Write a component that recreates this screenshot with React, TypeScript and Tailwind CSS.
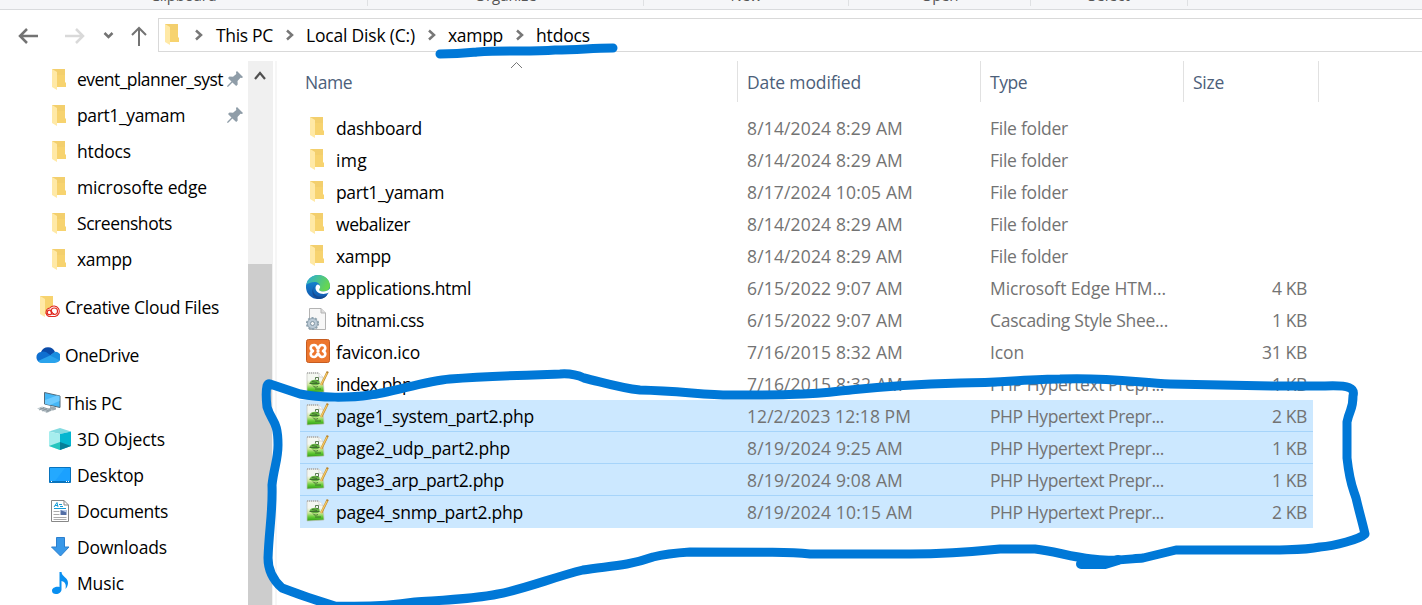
import React from "react";

type IconName = "folder" | "edge" | "css" | "xampp" | "php" | "cloudFolder" | "onedrive" | "pc" | "cube" | "desktop" | "doc" | "down" | "music";

function Icon({ name }: { name: IconName }) {
  switch (name) {
    case "folder":
      return (
        <svg width="14" height="21" viewBox="0 0 14 21">
          <path d="M0 0H13V13L14 14V18H5L0 18Z" fill="#f7d36f" />
          <path d="M0 0H13V6H0Z" fill="#efcb6c" opacity=".5" />
          <path d="M0 0L5 3V21L0 18Z" fill="#ffe9a6" />
        </svg>
      );
    case "cloudFolder":
      return (
        <svg width="20" height="22" viewBox="0 0 20 22">
          <path d="M0 0H13V18H5L0 18Z" fill="#f7d36f" />
          <path d="M0 0L5 3V21L0 18Z" fill="#ffe9a6" />
          <path d="M9 20.500H15A5.300 5.300 0 1 0 9.800 12A4.400 4.400 0 0 0 9 20.500Z" fill="#fff" stroke="#e12a20" strokeWidth="1.100" />
          <circle cx="14.300" cy="15.200" r="3.200" fill="none" stroke="#e12a20" strokeWidth="1.200" />
          <circle cx="9.500" cy="16.400" r="2.300" fill="none" stroke="#e12a20" strokeWidth="1.200" />
          <path d="m10 14.500 4 3.500" stroke="#e12a20" strokeWidth="1" />
        </svg>
      );
    case "onedrive":
      return (
        <svg width="24" height="16" viewBox="0 0 24 16">
          <path d="M5 5A7.500 7.500 0 0 1 19 5L14 9Z" fill="#0a4ba8" />
          <path d="M5 5a6 6 0 0 1 5 0l7 5-12 5.500A5.300 5.300 0 0 1 5 5Z" fill="#0f6fd0" />
          <path d="M18.500 5a5.300 5.300 0 0 1 2.500 10.300L12 10Z" fill="#1a8ee0" />
          <path d="M2 14 14 8.500 23.200 13c-1 2-2.700 3-4.700 3H5.500C4 16 2.900 15.200 2 14Z" fill="#2aa3ec" />
        </svg>
      );
    case "pc":
      return (
        <svg width="24" height="22" viewBox="0 0 24 22">
          <path d="M7.500 0.500 23 4V15.500L7.500 12Z" fill="#45b7f7" stroke="#546b7a" />
          <path d="M8 8 20 3.500 22.500 4V9L13 13 8 12Z" fill="#6ecbff" />
          <path d="M13 14v2l-3 1 6 1.500 3-1v-2" fill="#9da9b0" />
          <path d="M0 16.500 5 14.500 16 18 10 21Z" fill="#c1cbd0" />
          <path d="m3 16 9 3M6 15.500l8 2.500M2 18l5-2M5 19l5-2M9 20l5-2" stroke="#7c8a92" strokeWidth=".7" />
        </svg>
      );
    case "cube":
      return (
        <svg width="22" height="22" viewBox="0 0 22 22">
          <path d="M11 0 22 3.500 11 6 0 3.500Z" fill="#83dbe0" />
          <path d="M0 3.500 11 6V22L0 18Z" fill="#a6eeee" />
          <path d="M11 6 22 3.500V18L11 22Z" fill="#05b6d0" />
          <path d="M11 14 0 18 11 22Z" fill="#26c5be" />
          <path d="M11 14 22 18 11 22Z" fill="#067f98" />
        </svg>
      );
    case "desktop":
      return (
        <svg width="22" height="16" viewBox="0 0 22 16">
          <path d="M.5.5h21v15H.5Z" fill="#1ba1ff" stroke="#0873bd" />
          <path d="M1 14V1h15L6 14Z" fill="#24a9ff" />
          <path d="M1 14.500h20" stroke="#0873bd" />
          <path d="M2 14.500h1M17 14.500h1M19 14.500h1" stroke="#fff" />
        </svg>
      );
    case "doc":
      return (
        <svg width="18" height="22" viewBox="0 0 18 22">
          <path d="M.5.500H13L17.500 5V21.500H.5Z" fill="#fff" stroke="#888" />
          <path d="M13 .5V5h4.500" fill="none" stroke="#888" />
          <path d="M3 7 6 2.500 7 7M4 5.500h3M8 4.500h3M9 6.500h3M3 8.500h12" fill="none" stroke="#159bd7" />
          <path d="M2.500 11.500h6M2.500 14.500h6M2.500 17.500h13M2.500 19.500h13" stroke="#aaa" />
          <path d="M9.500 10h6v5h-6Z" fill="#536fa6" /><path d="M9.500 10h6v2.500Z" fill="#b9cbea" />
        </svg>
      );
    case "down":
      return (
        <svg width="19" height="20" viewBox="0 0 19 20">
          <path d="M5.500.5h8V10H18L9.500 19 .5 10h5Z" fill="#3998e8" stroke="#2b7fce" />
        </svg>
      );
    case "music":
      return (
        <svg width="17" height="22" viewBox="0 0 17 22">
          <path d="M7.500 0h2c.3 5 6.500 5 6.500 11 0 2-1 4.500-2.500 6 .8-4 .2-7-4-8v8.500C9.500 20 7 22 4 22c-2.300 0-4-1-4-3.200 0-2.700 3.500-4.500 7.500-3.800Z" fill="#098ff0" />
        </svg>
      );
    case "edge":
      return (
        <svg width="24" height="24" viewBox="0 0 24 24">
          <defs>
            <linearGradient id="eg" x1="0" y1="0" x2="1" y2=".4"><stop stopColor="#28acd8" /><stop offset="1" stopColor="#67d651" /></linearGradient>
            <linearGradient id="eb" x1="0" y1="0" x2="0" y2="1"><stop stopColor="#1592d8" /><stop offset="1" stopColor="#1356ae" /></linearGradient>
          </defs>
          <circle cx="12" cy="12" r="12" fill="url(#eb)" />
          <path d="M9 11c-4 4-1 10 5 10.500 3 .2 5.500-.6 7.500-2-2.500 4-6 4.800-10 4.500C5.500 22 5 14 9 11Z" fill="#154b92" />
          <path d="M.3 9.500C2 3.500 6.500 0 12 0c6.600 0 12 4.700 12 10.500 0 4-3.200 6.200-7 6.200-2.600 0-4.400-1-4.400-2.200 0-1 1.400-1.300 1.400-3.200 0-2.300-2.400-4.300-5.300-4.300C5 7 2 8.500.3 9.500Z" fill="url(#eg)" />
          <path d="M12 9.500c-3 .5-3.300 5-.8 7.300 3 2.700 8 2.700 11.300 1L24 17.500V13.500c-2 2.700-6 3.500-9 2.800-1.900-.5-2.300-1.500-1.500-2.500 1.300-1.600.7-3.500-1.500-4.300Z" fill="#fff" />
        </svg>
      );
    case "css":
      return (
        <svg width="21" height="23" viewBox="0 0 21 23">
          <path d="M3.500.5H15L19.500 5V21.500H3.500Z" fill="#f7f7f7" stroke="#b3b3b3" />
          <path d="M15 .5V5h4.500" fill="#ddd" stroke="#b3b3b3" />
          <circle cx="6.500" cy="15.500" r="5.700" fill="#9eafbc" stroke="#8fa2ae" strokeWidth="1.800" strokeDasharray="2 1.600" />
          <circle cx="6.500" cy="15.500" r="4.500" fill="#bccbd7" /><circle cx="6.500" cy="15.500" r="2" fill="#f7f7f7" stroke="#8094a2" />
        </svg>
      );
    case "xampp":
      return (
        <svg width="24" height="24" viewBox="0 0 24 24">
          <rect x=".5" y=".5" width="23" height="23" rx="2" fill="#ed762d" stroke="#c65c20" />
          <path d="M12 9.800C11 9.800 11.300 6 8.200 6C4.200 6 3.500 10.300 7 12C3.500 13.700 4.200 18 8.200 18C11.300 18 11 14.200 12 14.200C13 14.200 12.700 18 15.800 18C19.800 18 20.500 13.700 17 12C20.500 10.300 19.800 6 15.800 6C12.700 6 13 9.800 12 9.800Z" fill="none" stroke="#fff" strokeWidth="2.600" strokeLinejoin="round" />
          <path d="M10.500 12h3" stroke="#fff" strokeWidth="2.400" />
        </svg>
      );
    case "php":
      return (
        <svg width="23" height="23" viewBox="0 0 23 23">
          <defs><linearGradient id="pg" x1="0" y1="0" x2="0" y2="1"><stop offset=".35" stopColor="#f4f7f1" /><stop offset=".6" stopColor="#cbe895" /><stop offset=".8" stopColor="#62c934" /><stop offset="1" stopColor="#2f9d12" /></linearGradient></defs>
          <path d="M1 2H13L17 6L18 21L1 22Z" fill="url(#pg)" stroke="#c1c3bd" strokeWidth=".7" />
          <path d="M13 2V6H17" fill="#fff" stroke="#c6c6c6" strokeWidth=".7" />
          <path d="M1 2h12" stroke="#aaa" strokeWidth="1.500" strokeDasharray="1 1" />
          <path d="M3.500 12c1-3.500 7-4.500 10-1.500v2.500c-3 2-8 1.500-10-1Z" fill="#64b340" />
          <path d="M3.500 12.500h10M6 10.500l5 1M7 14.500c1 2 3 2 5 1M9 18h6M9.500 8.500V6.500h3v3h-2" fill="none" stroke="#365e2b" strokeWidth=".8" />
          <path d="M21.800.5 15.200 14" stroke="#b8842f" strokeWidth="2.200" /><path d="M21 2 14.900 14" stroke="#f5c965" strokeWidth="1.300" />
        </svg>
      );
  }
}

function Label({ text, width, className = "" }: { text: string; width: number; className?: string }) {
  const ref = React.useRef<HTMLSpanElement>(null);
  React.useLayoutEffect(() => {
    const el = ref.current;
    if (!el) return;
    el.style.letterSpacing = "0px";
    const natural = el.getBoundingClientRect().width;
    el.style.letterSpacing = `${(width - natural) / text.length}px`;
  }, [text, width]);
  return <span ref={ref} className={`inline-block shrink-0 whitespace-pre ${className}`}>{text}</span>;
}

const favorites = [
  { text: "event_planner_syst", width: 146, pinned: true },
  { text: "part1_yamam", width: 108, pinned: true },
  { text: "htdocs", width: 54 },
  { text: "microsofte edge", width: 130 },
  { text: "Screenshots", width: 95 },
  { text: "xampp", width: 55 },
];
const places: { text: string; width: number; icon: IconName }[] = [
  { text: "3D Objects", width: 88, icon: "cube" },
  { text: "Desktop", width: 67, icon: "desktop" },
  { text: "Documents", width: 91, icon: "doc" },
  { text: "Downloads", width: 90, icon: "down" },
  { text: "Music", width: 47, icon: "music" },
];
type Row = [IconName, string, number, string, number, string, number, string];
const folderRows: Row[] = [
  ["folder", "dashboard", 86, "8/14/2024 8:29 AM", 156, "File folder", 78, ""],
  ["folder", "img", 31, "8/14/2024 8:29 AM", 156, "File folder", 78, ""],
  ["folder", "part1_yamam", 108, "8/17/2024 10:05 AM", 166, "File folder", 78, ""],
  ["folder", "webalizer", 74, "8/14/2024 8:29 AM", 156, "File folder", 78, ""],
  ["folder", "xampp", 55, "8/14/2024 8:29 AM", 156, "File folder", 78, ""],
];
const fileRows: Row[] = [
  ["edge", "applications.html", 135, "6/15/2022 9:07 AM", 156, "Microsoft Edge HTM...", 176, "4 KB"],
  ["css", "bitnami.css", 88, "6/15/2022 9:07 AM", 156, "Cascading Style Shee...", 178, "1 KB"],
  ["xampp", "favicon.ico", 84, "7/16/2015 8:32 AM", 156, "Icon", 34, "31 KB"],
  ["php", "index.php", 76, "7/16/2015 8:32 AM", 156, "PHP Hypertext Prepr...", 174, "1 KB"],
  ["php", "page1_system_part2.php", 198, "12/2/2023 12:18 PM", 164, "PHP Hypertext Prepr...", 174, "2 KB"],
  ["php", "page2_udp_part2.php", 174, "8/19/2024 9:25 AM", 156, "PHP Hypertext Prepr...", 174, "1 KB"],
  ["php", "page3_arp_part2.php", 168, "8/19/2024 9:08 AM", 156, "PHP Hypertext Prepr...", 174, "1 KB"],
  ["php", "page4_snmp_part2.php", 187, "8/19/2024 10:15 AM", 166, "PHP Hypertext Prepr...", 174, "2 KB"],
];

function FileRow({ row, index }: { row: Row; index: number }) {
  const [icon, name, nw, date, dw, type, tw, size] = row;
  const selected = index >= 9;
  return (
    <div className={`flex h-8 w-[1013px] items-center text-[#737373] ${selected ? "bg-[#cce8ff]" : ""} ${selected && index < 12 ? "border-b border-[#a6d4fa]" : ""}`}>
      <div className={`flex w-[30px] shrink-0 justify-start ${icon === "folder" ? "pl-[10px] pb-px" : icon === "css" ? "pl-1.5 pb-px" : icon === "php" ? "pl-1.5 pb-[3px]" : "pl-1.5 pb-0.5"}`}><Icon name={icon} /></div>
      <div className="w-[417px] shrink-0 pl-1.5 text-black"><Label text={name} width={nw} /></div>
      <div className="w-[243px] shrink-0"><Label text={date} width={dw} /></div>
      <div className="w-[203px] shrink-0"><Label text={type} width={tw} /></div>
      <div className="w-[114px] shrink-0 text-right">{size && <Label text={size} width={size === "31 KB" ? 45 : 35} />}</div>
    </div>
  );
}

function Separator({ className }: { className: string }) {
  return <div className={className}><svg width="8" height="12" viewBox="0 0 8 12"><path d="m1 1.500 5 4.500-5 4.500" fill="none" stroke="#777" strokeWidth="2.500" /></svg></div>;
}

function Pin() {
  return <svg width="16" height="17" viewBox="0 0 16 17"><path d="M10 0 16 6l-1 1-1.500-.3-3 3.300.2 3.500-1.500 1.500-3.800-3.600L1.500 15.500 0 16l.5-1.500 4-4L1 7 2.500 5.500l3.500.2L9.300 3 9 1Z" fill="#8f9da8" /></svg>;
}

export default function App() {
  return (
    <div className="relative h-[605px] w-[1422px] overflow-hidden bg-white font-['Open_Sans','Noto_Sans',sans-serif] text-[17.500px] leading-6 text-black">
      <header className="flex h-2.5 items-end overflow-hidden border-b border-[#d9dbdd] bg-[#f5f6f8] pb-[3px] text-[15px] leading-5 text-[#555]">
        <div className="flex h-[21px] w-[368px] justify-center border-r border-[#dfe1e3]"><Label text="Clipboard" width={66} /></div>
        <div className="flex h-[21px] w-[276px] justify-center border-r border-[#dfe1e3]"><Label text="Organize" width={62} /></div>
        <div className="flex h-[21px] w-[205px] justify-center border-r border-[#dfe1e3]"><Label text="New" width={31} /></div>
        <div className="flex h-[21px] w-[182px] justify-center border-r border-[#dfe1e3]"><Label text="Open" width={37} /></div>
        <div className="flex h-[21px] w-[157px] justify-center border-r border-[#dfe1e3]"><Label text="Select" width={42} /></div>
      </header>
      <nav className="flex h-[51px] pt-2">
        <div className="flex w-[158px] items-center pb-2 pl-[18px]">
          <svg width="132" height="22" viewBox="0 0 132 22" fill="none" strokeWidth="2.500">
            <path d="M20 11H2M9 4l-7 7 7 7" stroke="#737373" /><path d="M47 11h18M58 4l7 7-7 7" stroke="#d9d9d9" />
            <path d="m86.500 8 4 4 4-4" stroke="#737373" /><path d="M121 21V3M114 10l7-7 7 7" stroke="#737373" strokeWidth="2" />
          </svg>
        </div>
        <div className="flex h-[34px] grow items-center border border-r-0 border-[#d9d9d9]">
          <div className="mb-px ml-1.5 w-[30px]"><Icon name="folder" /></div>
          <Separator className="w-[21px]" />
          <Label text="This PC" width={57} />
          <Separator className="ml-[13px] w-5" />
          <Label text="Local Disk (C:)" width={109} />
          <Separator className="ml-[13px] w-5" />
          <Label text="xampp" width={55} />
          <Separator className="ml-[13px] w-5" />
          <Label text="htdocs" width={54} />
        </div>
      </nav>
      <main className="flex h-[544px]">
        <aside className="flex h-full w-[248px] shrink-0 flex-col overflow-hidden">
          {favorites.map(item => (
            <div key={item.text} className="flex h-9 shrink-0 items-center pl-[52px]">
              <div className="w-[25px] shrink-0 pt-px"><Icon name="folder" /></div><Label text={item.text} width={item.width} />
              {item.pinned && <div className="ml-auto pr-[5px]"><Pin /></div>}
            </div>
          ))}
          <div className="flex h-12 shrink-0 items-center pl-10 pt-3"><div className="w-[25px]"><Icon name="cloudFolder" /></div><Label text="Creative Cloud Files" width={154} /></div>
          <div className="flex h-12 shrink-0 items-center pl-9 pt-3"><div className="w-[29px]"><Icon name="onedrive" /></div><Label text="OneDrive" width={74} /></div>
          <div className="flex h-12 shrink-0 items-center pl-[37px] pt-3"><div className="w-7"><Icon name="pc" /></div><Label text="This PC" width={57} /></div>
          {places.map(item => <div key={item.text} className="flex h-9 shrink-0 items-center pl-[49px]"><div className="mr-1.5 flex w-[22px] justify-center"><Icon name={item.icon} /></div><Label text={item.text} width={item.width} /></div>)}
        </aside>
        <div className="h-full w-[25px] shrink-0 border-r border-[#f0f0f0] bg-[#f0f0f0]">
          <div className="flex h-[203px] justify-center pt-2.5"><svg width="12" height="10"><path d="m1 8 5-6 5 6" fill="none" stroke="#505050" strokeWidth="2.200" /></svg></div>
          <div className="h-[341px] w-6 bg-[#cdcdcd]" />
        </div>
        <div className="w-[27px] shrink-0 border-l-2 border-white"><div className="h-full w-0.5 bg-[#f6f6f6]" /></div>
        <section className="w-[1122px]">
          <div className="flex h-[51px] items-start text-[#4c607a]">
            <div className="relative flex h-[41px] w-[438px] items-center border-r border-[#e1e1e1] pl-[5px]"><Label text="Name" width={47} className="mt-px" /><svg className="absolute left-[210px] top-0" width="13" height="8"><path d="m1 7 5.500-5.500L12 7" fill="none" stroke="#777" /></svg></div>
            <div className="flex h-[41px] w-[243px] items-center border-r border-[#e1e1e1] pl-[9px]"><Label text="Date modified" width={114} className="mt-px" /></div>
            <div className="flex h-[41px] w-[203px] items-center border-r border-[#e1e1e1] pl-[9px]"><Label text="Type" width={37} className="mt-px" /></div>
            <div className="flex h-[41px] w-[135px] items-center border-r border-[#e1e1e1] pl-[9px]"><Label text="Size" width={31} className="mt-px" /></div>
          </div>
          {[...folderRows, ...fileRows].map((row, i) => <FileRow key={row[1]} row={row} index={i} />)}
        </section>
      </main>
      <svg className="pointer-events-none absolute inset-0" width="1422" height="605" viewBox="0 0 1422 605" fill="none" stroke="#0078d7" strokeWidth="9" strokeLinecap="round" strokeLinejoin="round">
        <path d="M440 54C460 54 467 53 477 52C510 50 530 52 555 50C580 50 590 48 613 48" />
        <path d="M270 384L300 394C320 398 350 398 370 395C390 393 425 381 450 379C490 376 530 375 560 374Q573 373 584 378C605 383 620 388 640 390C680 391 705 395 730 395C770 395 810 395 840 391C870 388 890 385 960 383C1000 383 1030 379 1060 379C1110 377 1140 383 1170 384L1275 386H1325C1350 385 1355 388 1353 396C1353 410 1350 408 1347 422V458C1350 485 1353 488 1356 498C1360 515 1362 521 1365 534C1360 539 1335 546 1320 547C1300 551 1270 550 1176 550L1143 558C1128 559 1110 562 1092 559C1070 557 1055 551 1035 549H1000C970 552 930 554 910 554H810C790 552 770 552 690 552C675 553 665 554 653 557C625 567 605 566 583 570C554 577 525 589 498 594C475 599 445 600 415 602C390 606 365 607 335 606C318 601 300 595 282 588C273 580 268 570 268 558C269 530 273 510 272 485C274 467 278 460 278 445C278 420 272 423 267 407C266 398 266 390 267 386Q268 383 270 384Z" />
        <path d="M1081 564H1105L1118 560" strokeWidth="10" />
      </svg>
    </div>
  );
}
